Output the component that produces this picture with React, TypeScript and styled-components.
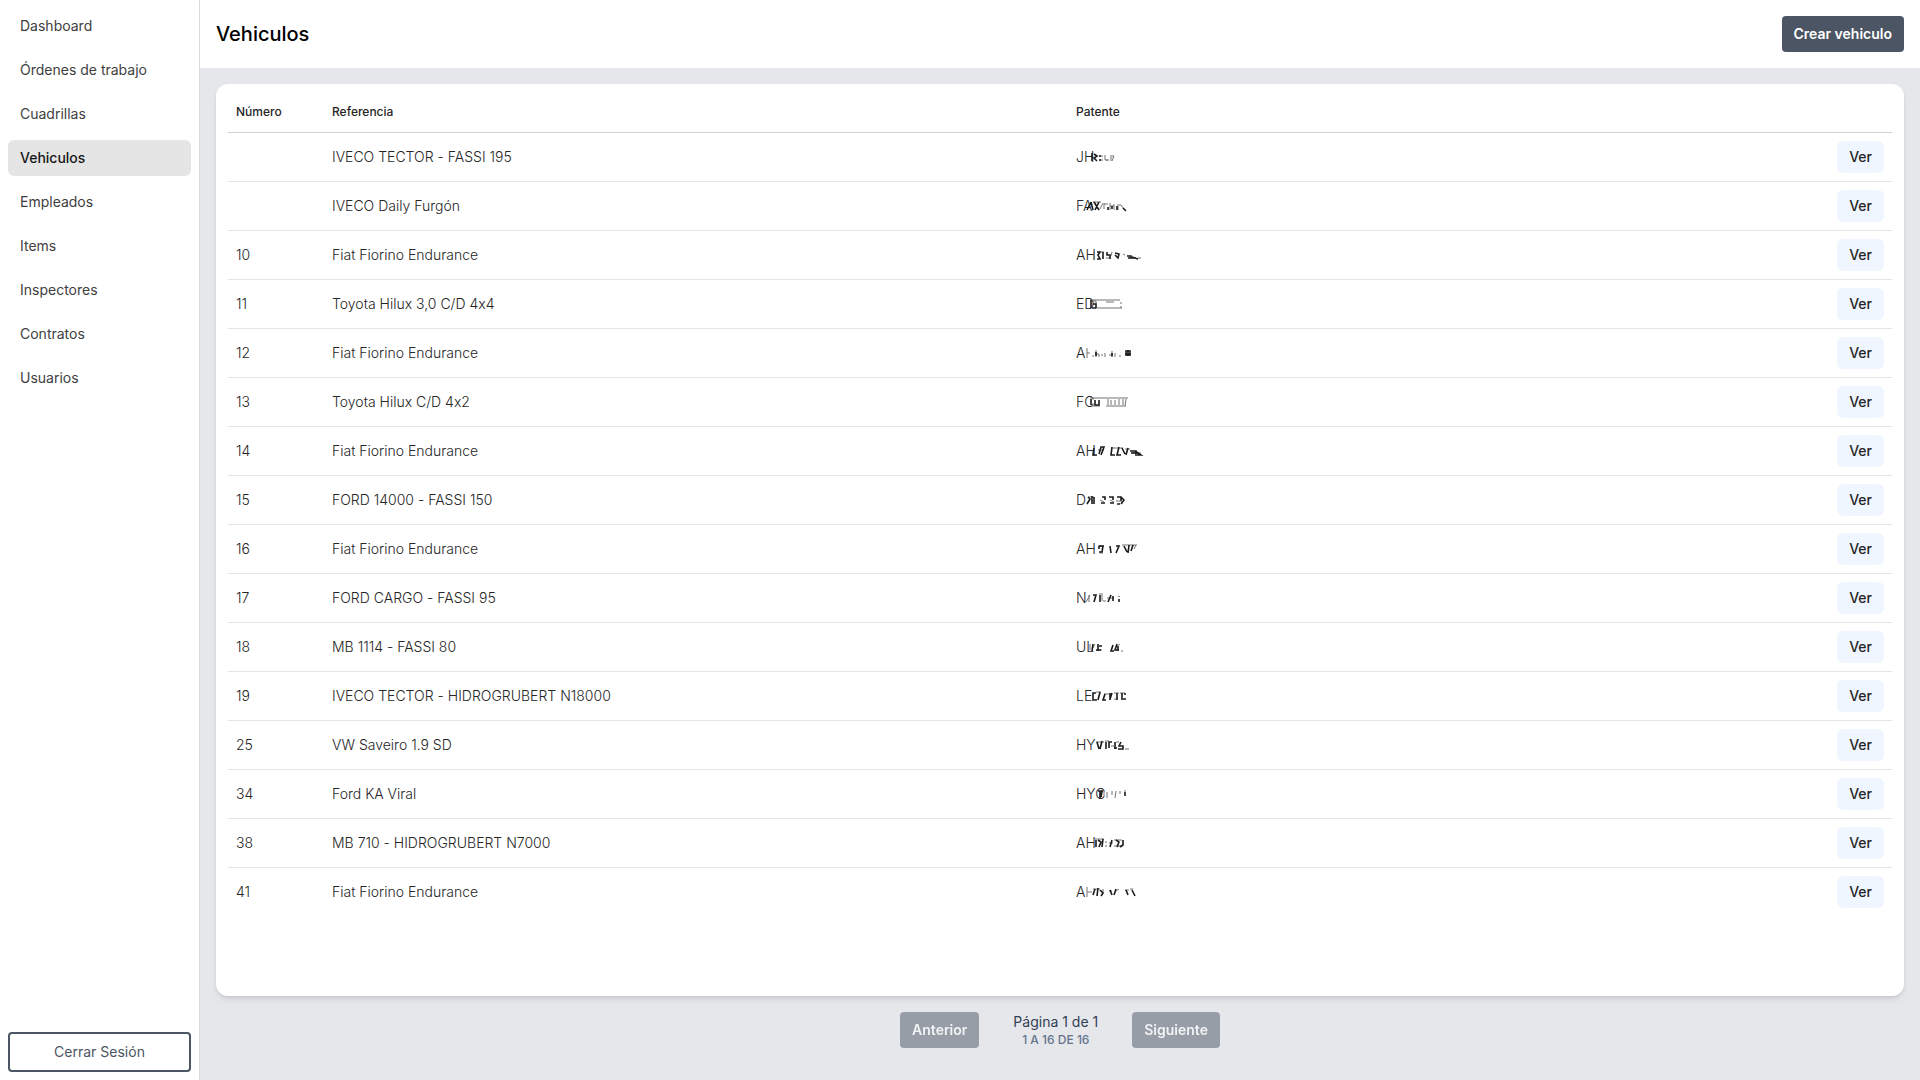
import React from "react";
import styled, { createGlobalStyle } from "styled-components";

type Vehicle = {
  number: string;
  reference: string;
  plate: string;
  dark: string;
  soft: string;
};

const NAV_ITEMS = [
  "Dashboard",
  "Órdenes de trabajo",
  "Cuadrillas",
  "Vehiculos",
  "Empleados",
  "Items",
  "Inspectores",
  "Contratos",
  "Usuarios",
];

// dark and soft are the strokes that cover the rest of each plate
const VEHICLES: Vehicle[] = [
  {
    number: "",
    reference: "IVECO TECTOR - FASSI 195",
    plate: "JH",
    dark: "M16 4v8M18 5l3 2-3 2 3 3M24 6v2M24 10v2",
    soft: "M26 6v2M26 10v2M29 6v5h3M30 11h3M34 7h4M35 8v4M38 7l-2 5",
  },
  {
    number: "",
    reference: "IVECO Daily Furgón",
    plate: "FA",
    dark: "M11 12l4-8M15 4l2 8M18 4l5 8M23 4l-4 8M47 10l3 3M32 9v3M36 8v3M41 8v4",
    soft: "M17 4h8M24 11l3-6M28 5v6M28 6h4M34 5v7M34 8h4M38 6v6M41 7h4M42 8v4M45 7l3 4",
  },
  {
    number: "10",
    reference: "Fiat Fiorino Endurance",
    plate: "AH",
    dark: "M21 5h3l-2 3 2 4h-3M27 5v7M31 5v3h3v4M39 6l4 1-1 4-3-3M51 9h4v2h5M52 11h5M56 10l6 2",
    soft: "M18 5v7M25 5h3M30 11h4M36 5l-1 4M47 7l2 1M62 11h3",
  },
  {
    number: "11",
    reference: "Toyota Hilux 3,0 C/D 4x4",
    plate: "ED",
    dark: "M15 4v8M16 12h4M17 8h3v4",
    soft: "M14 4h8M17 5h3v3M22 4h22M20 12h26M45 6v2M45 10v2M30 6h8",
  },
  {
    number: "12",
    reference: "Fiat Fiorino Endurance",
    plate: "A",
    dark: "M50 6h4v3h-4zM52 5v6M49 10h6M20 7v4M36 8v3",
    soft: "M11 3v10M11 8h3M16 11h2M20 5v7M20 9h3v3M26 9v2M29 8v4M33 10h3v2M36 6v6M39 8v4M43 11h2",
  },
  {
    number: "13",
    reference: "Toyota Hilux C/D 4x2",
    plate: "FC",
    dark: "M15 5v6M19 6v5h4V6",
    soft: "M14 4h38M16 12h8M30 12h20M32 5v6M35 6v5M39 6v5M43 5v6M47 5v6M50 5l-1 7",
  },
  {
    number: "14",
    reference: "Fiat Fiorino Endurance",
    plate: "AH",
    dark: "M18 5l-1 7h4M23 11l2-7h3l-3 8M36 4l-1 8h4M43 4l-2 8h4M46 5l3 6M52 5l-2 7M54 8h6v3M55 10h8M59 8l6 4h-6",
    soft: "M22 7h6M35 5h12M49 6h5M56 10h9",
  },
  {
    number: "15",
    reference: "FORD 14000 - FASSI 150",
    plate: "D",
    dark: "M12 5l2 2-3 5M16 4v8M18 5v7M26 5h3v3M25 11h4M33 5h4v3M34 11h4M41 5h4v4M45 5l3 3-3 4M41 12h3",
    soft: "M12 5h6M24 8l4 2M34 8l4 2M40 9h6",
  },
  {
    number: "16",
    reference: "Fiat Fiorino Endurance",
    plate: "AH",
    dark: "M23 5h4l-1 6h-3M23 8v-3M34 5l1 7M40 5h3l-3 7M48 5l3 6M53 4l-1 8M57 4l-2 6",
    soft: "M22 5h6M46 4h15M60 4l-2 4M24 12h3",
  },
  {
    number: "17",
    reference: "FORD CARGO - FASSI 95",
    plate: "N",
    dark: "M17 5h3l-2 7M24 5v7M35 5l-3 7M37 6v5M43 9v3",
    soft: "M14 5l-4 7M13 5v7M26 5v6M23 4h4M31 8h7M42 6l2 1M27 11h3",
  },
  {
    number: "18",
    reference: "MB 1114 - FASSI 80",
    plate: "UL",
    dark: "M17 5l-1 7M22 5v7M20 11h5M23 7h3M37 6l-2 6h3M41 5l-2 6h4M42 7v5",
    soft: "M14 5v6M19 5l-2 4M44 5l-4 3M25 10v2M45 12h2",
  },
  {
    number: "19",
    reference: "IVECO TECTOR - HIDROGRUBERT N18000",
    plate: "LE",
    dark: "M20 5h-3v7h4M24 4l-2 8M29 6l-2 6h3M34 5v7M36 5l-2 6M41 5v7M46 5v7M48 6h2M47 11h3",
    soft: "M20 4h5M28 6h5M38 5h5M38 11h4M44 5h5",
  },
  {
    number: "25",
    reference: "VW Saveiro 1.9 SD",
    plate: "HY",
    dark: "M21 5l2 7M26 4l-2 8M30 5v7M36 5h-3v6M39 5v7M38 11h3M45 5l-2 4h4v3h-5",
    soft: "M20 5h8M29 4h4M35 9h3M40 5h3M49 12h4",
  },
  {
    number: "34",
    reference: "Ford KA Viral",
    plate: "HYC",
    dark: "M22 5h5M24 5v7M26 5l-1 6M49 6v4",
    soft: "M28 5v4M31 6v6M36 5v4M40 5l-1 7M44 5v3M48 5h2",
  },
  {
    number: "38",
    reference: "MB 710 - HIDROGRUBERT N7000",
    plate: "AH",
    dark: "M20 5v7M22 5l3 2-2 5M27 4l-1 8M36 5l-2 7M40 5l3 2-2 5M47 5v5l-3 2",
    soft: "M19 4h9M30 6v2M30 10v2M33 8h4M38 5h8M38 11h7",
  },
  {
    number: "41",
    reference: "Fiat Fiorino Endurance",
    plate: "A",
    dark: "M19 5l-2 6M22 4l-1 8M24 6l3 3-2 3M34 6l2 5M40 5l-2 6M50 6l2 5M56 6l3 6",
    soft: "M11 3v10M11 8h5M17 5h7M27 5v4M33 7h3M40 7l3-2M49 6h4M54 5h3",
  },
];

const App = () => {
  return (
    <>
      <GlobalStyle />
      <Layout>
        <Sidebar>
          <Nav>
            {NAV_ITEMS.map((item) => (
              <NavLink key={item} href="#" $active={item === "Vehiculos"}>
                {item}
              </NavLink>
            ))}
          </Nav>
          <LogoutButton type="button">Cerrar Sesión</LogoutButton>
        </Sidebar>
        <Main>
          <Header>
            <Title>Vehiculos</Title>
            <Button type="button">Crear vehiculo</Button>
          </Header>
          <Content>
            <Card>
              <Table>
                <thead>
                  <tr>
                    <HeadCell $width="96px">Número</HeadCell>
                    <HeadCell>Referencia</HeadCell>
                    <HeadCell>Patente</HeadCell>
                    <HeadCell $width="80px" aria-label="Acciones" />
                  </tr>
                </thead>
                <tbody>
                  {VEHICLES.map((vehicle, index) => (
                    <Row key={index}>
                      <Cell>{vehicle.number}</Cell>
                      <Cell>{vehicle.reference}</Cell>
                      <Cell>
                        <Plate>
                          {vehicle.plate}
                          <Scribble viewBox="0 0 72 16" aria-hidden="true">
                            <path d={vehicle.soft} stroke="#77736f" />
                            <path
                              d={vehicle.dark}
                              stroke="#1c1a1a"
                              strokeWidth="1.6"
                            />
                          </Scribble>
                        </Plate>
                      </Cell>
                      <Cell $right>
                        <ViewButton type="button">Ver</ViewButton>
                      </Cell>
                    </Row>
                  ))}
                </tbody>
              </Table>
            </Card>
            <Pagination>
              <Button type="button" disabled>
                Anterior
              </Button>
              <PageInfo>
                <PageText>Página 1 de 1</PageText>
                <PageRange>1 a 16 de 16</PageRange>
              </PageInfo>
              <Button type="button" disabled>
                Siguiente
              </Button>
            </Pagination>
          </Content>
        </Main>
      </Layout>
    </>
  );
};

export default App;

const GlobalStyle = createGlobalStyle`
  * {
    box-sizing: border-box;
  }

  body {
    margin: 0;
    background-color: #e5e7eb;
    color: #262626;
    font-family: Inter, "Liberation Sans", sans-serif;
    font-size: 14px;
    font-variant-ligatures: no-contextual;
    line-height: 20px;
  }

  button {
    font: inherit;
    cursor: pointer;
  }
`;

const Layout = styled.div`
  display: flex;
  min-height: 100vh;
`;

const Sidebar = styled.aside`
  display: flex;
  flex-direction: column;
  justify-content: space-between;
  flex: 0 0 200px;
  padding: 8px;
  background-color: #fff;
  border-right: 1px solid #d9dbdf;
`;

const Nav = styled.nav`
  display: flex;
  flex-direction: column;
  gap: 8px;
`;

const NavLink = styled.a<{ $active: boolean }>`
  padding: 8px 12px;
  border-radius: 6px;
  background-color: ${({ $active }) => ($active ? "#e5e5e5" : "transparent")};
  color: ${({ $active }) => ($active ? "#171717" : "#404040")};
  font-weight: ${({ $active }) => ($active ? 500 : 400)};
  text-decoration: none;
`;

const LogoutButton = styled.button`
  height: 40px;
  border: 2px solid #4b5563;
  border-radius: 4px;
  background-color: #fff;
  color: #4b5563;
`;

const Main = styled.main`
  display: flex;
  flex: 1;
  flex-direction: column;
  min-width: 0;
`;

const Header = styled.header`
  display: flex;
  align-items: center;
  justify-content: space-between;
  padding: 16px;
  background-color: #fff;
`;

const Title = styled.h1`
  margin: 0;
  color: #000;
  font-size: 20px;
  font-weight: 500;
  line-height: 28px;
`;

const Button = styled.button`
  height: 36px;
  padding: 0 12px;
  border: none;
  border-radius: 4px;
  background-color: #4b5563;
  color: #fff;
  font-weight: 600;

  &:disabled {
    opacity: 0.5;
    cursor: default;
  }
`;

const Content = styled.div`
  display: flex;
  flex: 1;
  flex-direction: column;
  gap: 16px;
  padding: 16px 16px 32px;
`;

const Card = styled.section`
  flex: 1;
  padding: 12px;
  border-radius: 12px;
  background-color: #fff;
  box-shadow: 0 4px 6px -1px rgba(0, 0, 0, 0.1),
    0 2px 4px -2px rgba(0, 0, 0, 0.1);
`;

const Table = styled.table`
  width: 100%;
  border-collapse: separate;
  border-spacing: 0;
  table-layout: fixed;
`;

const HeadCell = styled.th<{ $width?: string }>`
  width: ${({ $width }) => $width || "auto"};
  height: 37px;
  padding: 0 8px 4px;
  border-bottom: 1px solid #d4d4d4;
  font-size: 12px;
  font-weight: 500;
  line-height: 16px;
  text-align: left;
`;

const Cell = styled.td<{ $right?: boolean }>`
  height: 49px;
  padding: 8px;
  border-bottom: 1px solid #e5e5e5;
  font-weight: 300;
  text-align: ${({ $right }) => ($right ? "right" : "left")};
`;

const Row = styled.tr`
  &:last-child ${Cell} {
    height: 48px;
    border-bottom: none;
  }
`;

const Plate = styled.span`
  position: relative;
  display: block;
`;

const Scribble = styled.svg`
  position: absolute;
  top: 2px;
  left: 0;
  width: 72px;
  height: 16px;
  fill: none;
  filter: blur(0.4px);
`;

const ViewButton = styled.button`
  display: block;
  height: 32px;
  margin-left: auto;
  padding: 0 12px;
  border: none;
  border-radius: 6px;
  background-color: #eff6ff;
  color: #262626;
  font-weight: 500;
`;

const Pagination = styled.div`
  display: flex;
  align-items: center;
  justify-content: center;
  gap: 34px;
`;

const PageInfo = styled.div`
  display: flex;
  flex-direction: column;
  align-items: center;
  color: #334155;
`;

const PageText = styled.span`
  line-height: 20px;
`;

const PageRange = styled.span`
  color: #64748b;
  font-size: 12px;
  font-weight: 500;
  line-height: 16px;
  text-transform: uppercase;
`;
